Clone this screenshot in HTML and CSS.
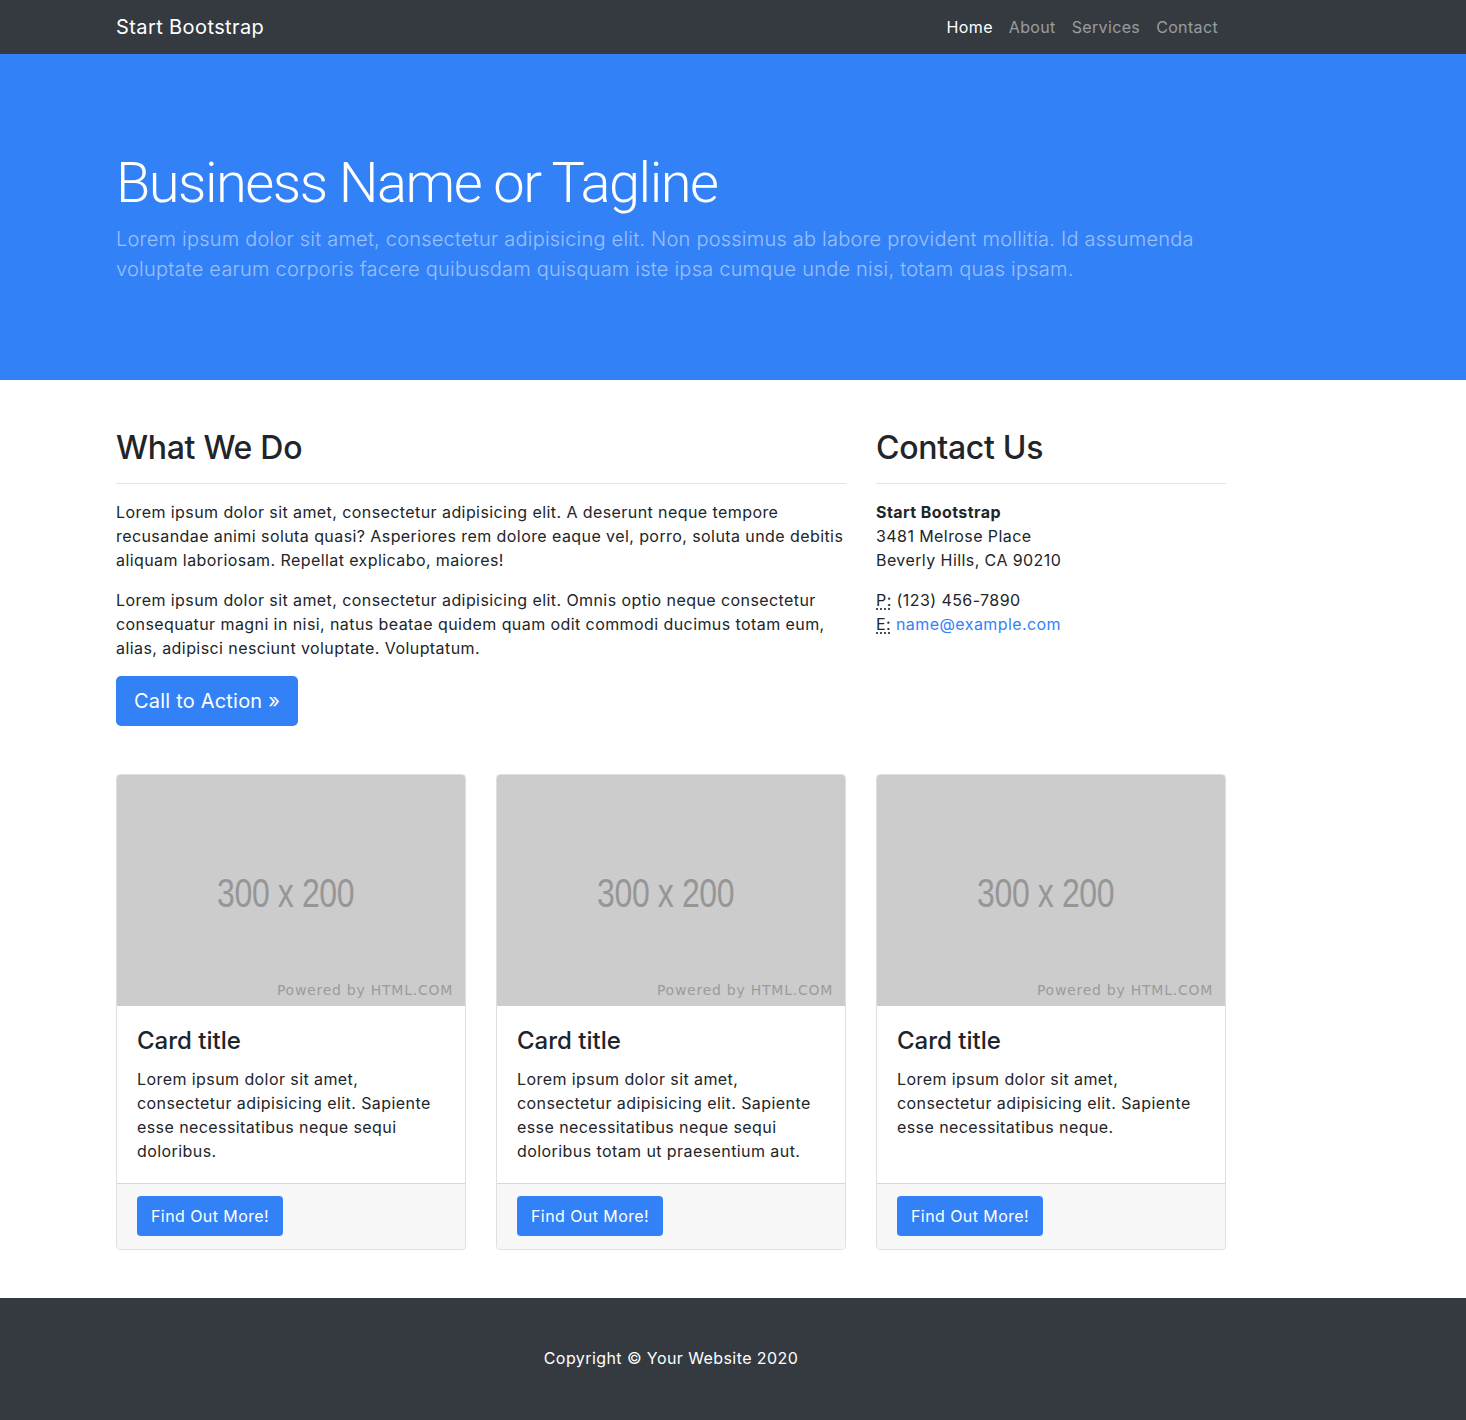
FILE: index.html
```html
<!DOCTYPE html>
<html lang="en">
<head>
<meta charset="utf-8">
<title>Business Frontpage - Start Bootstrap Template</title>
<link rel="stylesheet" href="styles.css">
</head>
<body>
<nav class="navbar">
  <div class="container nav-inner">
    <a class="brand" href="#">Start Bootstrap</a>
    <ul class="nav-links">
      <li><a class="nav-link active" href="#">Home</a></li>
      <li><a class="nav-link" href="#">About</a></li>
      <li><a class="nav-link" href="#">Services</a></li>
      <li><a class="nav-link" href="#">Contact</a></li>
    </ul>
  </div>
</nav>

<header class="hero">
  <div class="container">
    <h1 class="hero-title">Business Name or Tagline</h1>
    <p class="lead">Lorem ipsum dolor sit amet, consectetur adipisicing elit. Non possimus ab labore provident mollitia. Id assumenda voluptate earum corporis facere quibusdam quisquam iste ipsa cumque unde nisi, totam quas ipsam.</p>
  </div>
</header>

<main class="container">
  <div class="row">
    <div class="col-8">
      <h2>What We Do</h2>
      <hr>
      <p>Lorem ipsum dolor sit amet, consectetur adipisicing elit. A deserunt neque tempore recusandae animi soluta quasi? Asperiores rem dolore eaque vel, porro, soluta unde debitis aliquam laboriosam. Repellat explicabo, maiores!</p>
      <p>Lorem ipsum dolor sit amet, consectetur adipisicing elit. Omnis optio neque consectetur consequatur magni in nisi, natus beatae quidem quam odit commodi ducimus totam eum, alias, adipisci nesciunt voluptate. Voluptatum.</p>
      <a class="btn btn-lg" href="#">Call to Action &raquo;</a>
    </div>
    <div class="col-4">
      <h2>Contact Us</h2>
      <hr>
      <address>
        <strong>Start Bootstrap</strong><br>
        3481 Melrose Place<br>
        Beverly Hills, CA 90210
      </address>
      <address>
        <abbr title="Phone">P:</abbr> (123) 456-7890<br>
        <abbr title="Email">E:</abbr> <a class="link" href="#">name@example.com</a>
      </address>
    </div>
  </div>

  <div class="cards">
    <div class="card">
      <div class="placeholder"><span class="ph-size">300 x 200</span><span class="ph-power">Powered by HTML.COM</span></div>
      <div class="card-body">
        <h4 class="card-title">Card title</h4>
        <p class="card-text">Lorem ipsum dolor sit amet, consectetur adipisicing elit. Sapiente esse necessitatibus neque sequi doloribus.</p>
      </div>
      <div class="card-footer"><a class="btn" href="#">Find Out More!</a></div>
    </div>
    <div class="card">
      <div class="placeholder"><span class="ph-size">300 x 200</span><span class="ph-power">Powered by HTML.COM</span></div>
      <div class="card-body">
        <h4 class="card-title">Card title</h4>
        <p class="card-text">Lorem ipsum dolor sit amet, consectetur adipisicing elit. Sapiente esse necessitatibus neque sequi doloribus totam ut praesentium aut.</p>
      </div>
      <div class="card-footer"><a class="btn" href="#">Find Out More!</a></div>
    </div>
    <div class="card">
      <div class="placeholder"><span class="ph-size">300 x 200</span><span class="ph-power">Powered by HTML.COM</span></div>
      <div class="card-body">
        <h4 class="card-title">Card title</h4>
        <p class="card-text">Lorem ipsum dolor sit amet, consectetur adipisicing elit. Sapiente esse necessitatibus neque.</p>
      </div>
      <div class="card-footer"><a class="btn" href="#">Find Out More!</a></div>
    </div>
  </div>
</main>

<footer class="footer">
  <p>Copyright &copy; Your Website 2020</p>
</footer>
</body>
</html>
```

FILE: styles.css
```css
* { box-sizing: border-box; }
html, body { margin: 0; padding: 0; }
body {
  font-family: Inter, "Noto Sans", "Liberation Sans", sans-serif;
  font-size: 16px;
  line-height: 1.5;
  color: #212529;
  background: #fff;
  letter-spacing: 0.42px;
}
a { text-decoration: none; }

.container {
  width: 1140px;
  margin-left: 101px;
  padding: 0 15px;
}

/* navbar */
.navbar { background: #343a40; height: 54px; }
.nav-inner { display: flex; align-items: center; justify-content: space-between; height: 54px; }
.brand { color: #fff; font-size: 20px; line-height: 30px; letter-spacing: 0.4px; }
.nav-links { display: flex; list-style: none; margin: 0; padding: 0; }
.nav-link { display: block; padding: 8px; color: rgba(255,255,255,.5); font-size: 16px; line-height: 24px; letter-spacing: 0.35px; }
.nav-link.active { color: #fff; }

/* hero */
.hero { background: #3381f6; padding: 48px 0; }
.hero-title {
  margin: 48px 0 8px;
  font-family: Roboto, Inter, sans-serif;
  font-size: 56px;
  font-weight: 300;
  line-height: 66px;
  color: #fff;
  letter-spacing: -1.5px;
}
.lead {
  margin: 0 0 48px;
  font-size: 20px;
  font-weight: 300;
  line-height: 30px;
  color: rgba(255,255,255,.5);
  letter-spacing: 0.22px;
}

/* main */
main { margin-top: 49px; }
.row { display: flex; gap: 30px; }
.col-8 { width: 730px; margin-bottom: 48px; }
.col-4 { width: 350px; margin-bottom: 48px; }
h2 { font-size: 32px; font-weight: 500; line-height: 38.4px; margin: 0 0 8px; letter-spacing: -0.3px; }
hr { border: 0; border-top: 1px solid rgba(0,0,0,.1); margin: 16px 0; }
p { margin: 0 0 16px; }
address { font-style: normal; margin: 0 0 16px; }
address strong { font-weight: 700; }
abbr { text-decoration: underline dotted; text-underline-offset: 2px; }
.link { color: #3381f6; }

.btn {
  display: inline-block;
  background: #3381f6;
  color: #fff;
  border-radius: 4px;
  padding: 7px 14px;
  font-size: 16px;
  line-height: 26px;
}
.btn-lg { padding: 9px 18px; font-size: 20px; line-height: 32px; border-radius: 5px; letter-spacing: 0.2px; }

/* cards */
.cards { display: flex; gap: 30px; margin-bottom: 48px; }
.card {
  width: 350px;
  border: 1px solid rgba(0,0,0,.125);
  border-radius: 4px;
  display: flex;
  flex-direction: column;
  overflow: hidden;
}
.placeholder {
  height: 231px;
  background: #cccccc;
  position: relative;
  display: flex;
  align-items: center;
  justify-content: center;
}
.ph-size {
  font-family: "Liberation Sans", Arial, sans-serif;
  font-size: 40px;
  color: #969696;
  transform: scaleX(0.8);
  margin-top: 4px;
  margin-left: -10px;
  letter-spacing: -0.5px;
}
.ph-power {
  position: absolute;
  right: 12px;
  bottom: 5px;
  font-family: "DejaVu Sans", sans-serif;
  font-size: 14px;
  color: #9b9b9b;
  letter-spacing: 0.75px;
}
.card-body { flex: 1; padding: 20px; }
.card-title { font-size: 24px; font-weight: 500; line-height: 29px; margin: 0 0 12px; letter-spacing: 0; }
.card-text { margin: 0; }
.card-footer {
  background: #f7f7f7;
  border-top: 1px solid rgba(0,0,0,.125);
  padding: 12px 20px 13px;
}

/* footer */
.footer { background: #343a40; padding: 48px 0 50px; }
.footer p { margin: 0; width: 1342px; text-align: center; color: #fff; }
```
